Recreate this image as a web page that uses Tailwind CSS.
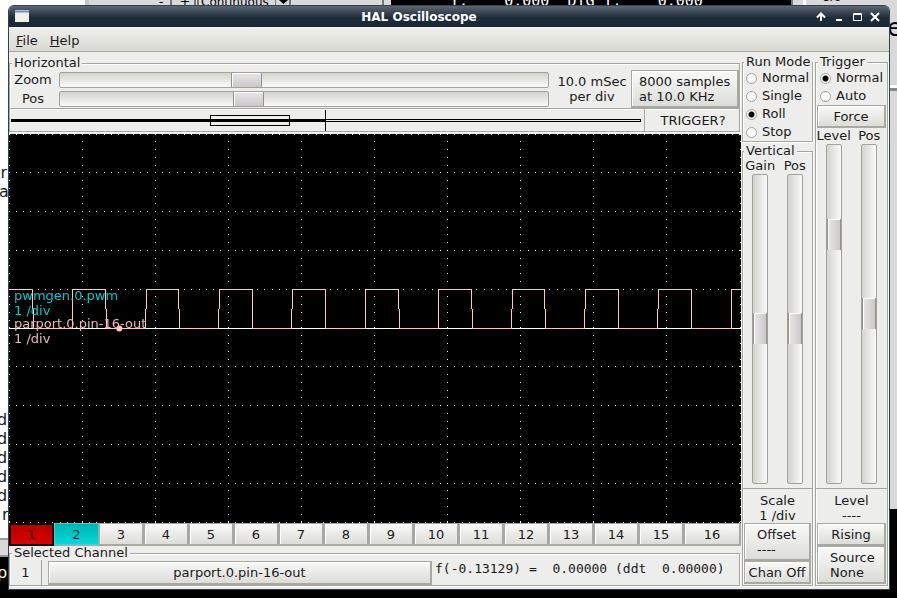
<!DOCTYPE html>
<html lang="en">
<head>
    <meta charset="UTF-8">
    <meta name="viewport" content="width=device-width, initial-scale=1.0">
    <title>HAL Oscilloscope</title>
    <script src="https://cdn.jsdelivr.net/npm/@tailwindcss/browser@4"></script>
</head>
<body class="relative h-screen overflow-hidden bg-white font-['DejaVu_Sans',sans-serif] text-[13px] leading-[15px] text-[#1a1a1a]">
    <!-- windows lying behind the scope -->
    <div class="absolute inset-0 overflow-hidden" aria-hidden="true">
        <div class="absolute left-[85px] top-0 h-3 w-[299px] border-l-4 border-r-2 border-l-[#c4c4c4] border-r-[#777] bg-[#d9d9d9] leading-3">
            <span class="absolute left-[63px] -top-2.5 h-[18px] w-5 border-r-2 border-[#777] pt-1.5 text-center text-black">-</span>
            <span class="absolute left-[87px] -top-2.5 h-[18px] w-5 border-r-2 border-[#777] pt-1.5 text-center text-black">+</span>
            <span class="absolute left-[108px] -top-2.5 h-[18px] w-[76px] border-l-2 border-[#777] pl-0.5 pt-1.5 text-[12px] text-black">Continuous</span>
            <svg class="absolute left-[186px] top-0" width="16" height="5"><path d="M0 0v5M15 0v5" stroke="#777" stroke-width="2"/><path d="M4 0h9L8.500 4z"/></svg>
        </div>
        <div class="absolute left-[384px] top-0 h-3 w-[407px] border-l-[7px] border-[#d9d9d9] bg-black"></div>
        <pre class="absolute left-[450px] -top-2 font-['DejaVu_Sans_Mono',monospace] text-[15px] leading-[18px] text-white">Y:    0.000  DTG Y:    0.000</pre>
        <div class="absolute left-[791px] right-0 top-0 h-[509px] border-l-2 border-[#777] bg-[#d9d9d9]">
            <div class="absolute left-2.5 top-0 h-3 w-[3px] bg-white"></div>
            <span class="absolute left-[29px] -top-2.5 text-[12px] text-black">ero</span>
            <span class="absolute right-[-5px] top-4 text-[24px] leading-6 text-black">e</span>
            <div class="absolute right-0 top-[85px] h-1.5 w-2 border-b-[3px] border-[#888] bg-white"></div>
        </div>
        <div class="absolute bottom-0 right-0 h-[89px] w-2 bg-black"></div>
        <div class="absolute bottom-0 left-0 right-0 h-2.5 bg-black"></div>
        <div class="absolute left-[-1px] top-[163px] w-2 text-right text-[16px] leading-[19px]">r<br>a</div>
        <div class="absolute left-[-3px] top-[410px] w-3 text-[16px] leading-[19px]">d<br>d<br>d<br>d<br>d<br>&nbsp;r</div>
        <div class="absolute bottom-[41px] left-0 h-[19px] w-2 border-y-2 border-[#999] bg-[#d9d9d9]"></div>
        <div class="absolute bottom-0 left-0 h-[41px] w-2 bg-black"></div>
        <span class="absolute bottom-4 left-[-3px] text-[16px] leading-[19px] text-white">p</span>
    </div>

    <div class="relative h-full pb-2 pl-2 pr-[7px] pt-[5px]">
        <main class="flex h-full flex-col overflow-hidden rounded-t-md border-x border-b border-[#33424f] bg-[#ededeb]">
            <!-- title bar -->
            <header class="relative flex h-[22px] shrink-0 items-center justify-end border-t border-[#33424f] bg-linear-to-b from-[#5c6873] via-[#1f2d3b] via-55% to-[#1a2836]">
                <svg class="absolute left-1.5 top-1" width="14" height="12"><path d="M0 0h14v12H0z" fill="#f0f0ea"/><path d="M0 1.500h14" stroke="#6b8cc4" stroke-width="2"/></svg>
                <h1 class="absolute inset-x-0 pr-15 pt-0.5 text-center text-[12px] font-bold text-white">HAL Oscilloscope</h1>
                <div class="relative mr-[7px] flex gap-1">
                    <button aria-label="Shade" class="size-[14px]"><svg width="14" height="14" fill="none" stroke="#fff" stroke-width="2"><path d="M7 11V4M3 7.500l4-4 4 4"/></svg></button>
                    <button aria-label="Minimize" class="size-[14px]"><svg width="14" height="14"><path d="M4 9h6v2H4z" fill="#fff"/></svg></button>
                    <button aria-label="Maximize" class="size-[14px]"><svg width="14" height="14" fill="none" stroke="#fff"><path d="M3.500 3.500h8v7h-8zM3 4.500h9"/></svg></button>
                    <button aria-label="Close" class="size-[14px]"><svg width="14" height="14" stroke="#fff" stroke-width="2"><path d="M3 3l8 8M11 3l-8 8"/></svg></button>
                </div>
            </header>
            <nav class="flex h-[25px] shrink-0 items-center gap-3 border-b border-[#a5a69c] bg-linear-to-b from-[#efefed] to-[#d9dad3] px-[7px] pt-0.5">
                <button><u>F</u>ile</button>
                <button><u>H</u>elp</button>
            </nav>

            <div class="flex min-h-0 flex-1 pb-[3px]">
                <!-- left side: time base, screen, channels -->
                <section class="flex min-w-0 flex-1 flex-col pt-1">
                    <fieldset class="mr-px border border-[#a5a69f] shadow-[inset_1px_1px_0_#fff,1px_1px_0_#fff]">
                        <legend class="ml-0.5 bg-[#ededeb] px-0.5 leading-[14px]">Horizontal</legend>
                        <div class="flex h-[38px]">
                            <div class="grid flex-1 grid-cols-[46px_1fr] content-start gap-x-[3px] gap-y-[3px] pt-0.5 text-center">
                                <label for="hzoom">Zoom</label>
                                <input id="hzoom" type="range" min="0" max="1000" value="374" class="h-4 w-full appearance-none rounded-xs border border-[#a2a29a] bg-linear-to-b from-[#d3d4ce] to-[#fafaf9] [&::-webkit-slider-thumb]:h-[14px] [&::-webkit-slider-thumb]:w-[31px] [&::-webkit-slider-thumb]:appearance-none [&::-webkit-slider-thumb]:border-x [&::-webkit-slider-thumb]:border-[#94928e] [&::-webkit-slider-thumb]:bg-linear-to-b [&::-webkit-slider-thumb]:from-[#e8e6e6] [&::-webkit-slider-thumb]:to-[#cac8c8] [&::-webkit-slider-thumb]:shadow-[inset_1px_1px_0_#fff]">
                                <label for="hpos">Pos</label>
                                <input id="hpos" type="range" min="0" max="1000" value="379" class="h-4 w-full appearance-none rounded-xs border border-[#a2a29a] bg-linear-to-b from-[#d3d4ce] to-[#fafaf9] [&::-webkit-slider-thumb]:h-[14px] [&::-webkit-slider-thumb]:w-[31px] [&::-webkit-slider-thumb]:appearance-none [&::-webkit-slider-thumb]:border-x [&::-webkit-slider-thumb]:border-[#94928e] [&::-webkit-slider-thumb]:bg-linear-to-b [&::-webkit-slider-thumb]:from-[#e8e6e6] [&::-webkit-slider-thumb]:to-[#cac8c8] [&::-webkit-slider-thumb]:shadow-[inset_1px_1px_0_#fff]">
                            </div>
                            <div class="w-[82px] self-center pl-1 text-center">10.0 mSec<br>per div</div>
                            <button class="w-[108px] whitespace-nowrap border border-b-2 border-r-2 border-[#a9a9a1] bg-linear-to-b from-[#f9f9f8] to-[#dcdcd8] pl-[7px] text-left shadow-[inset_1px_1px_0_#fff]">8000 samples<br>at 10.0 KHz</button>
                        </div>
                        <div class="flex h-[23px] border-t border-[#a5a69f] shadow-[inset_0_1px_0_#fff]">
                            <!-- record buffer: filled part, pretrigger mark, visible window -->
                            <svg class="ml-px h-[22px] w-full flex-1" shape-rendering="crispEdges">
                                <rect x="0" y="10" width="50%" height="3"/>
                                <rect x="49.900%" y="10" width="50%" height="1"/>
                                <rect x="49.900%" y="12" width="50%" height="1"/>
                                <rect x="99.800%" y="10" width="1" height="3"/>
                                <rect x="49.850%" y="1" width="1" height="21"/>
                                <rect x="31.700%" y="6.500" width="12.500%" height="10" fill="none" stroke="#000"/>
                            </svg>
                            <div class="ml-[3px] w-[95px] border-l border-[#a5a69f] pl-0.5 pt-1 text-center">TRIGGER?</div>
                        </div>
                    </fieldset>

                    <div class="relative mt-0.5 min-h-0 flex-1 overflow-hidden bg-black">
                        <canvas id="scope" class="absolute inset-0 size-full"></canvas>
                        <div class="absolute left-[5px] top-[154px] text-[#00c8c8]">pwmgen.0.pwm<br>1 /div</div>
                        <div class="absolute left-[5px] top-[182px] text-[#e6b8b8]">parport.0.pin-16-out<br>1 /div</div>
                    </div>

                    <div id="channels" class="grid h-[23px] grid-cols-[repeat(15,45fr)_57fr]">
                        <button class="border-2 border-[#200000] bg-linear-to-b from-[#b40000] to-[#dc0000] text-[#400000]">1</button>
                        <button class="border border-b-2 border-[#5cc8c8] bg-linear-to-b from-[#00b2b2] to-[#00dada] text-[#003c3c]">2</button>
                        <button class="border border-b-2 border-r-2 border-[#a9a9a1] bg-linear-to-b from-[#f9f9f8] to-[#dcdcd8] shadow-[inset_1px_1px_0_#fff]">3</button>
                        <button class="border border-b-2 border-r-2 border-[#a9a9a1] bg-linear-to-b from-[#f9f9f8] to-[#dcdcd8] shadow-[inset_1px_1px_0_#fff]">4</button>
                        <button class="border border-b-2 border-r-2 border-[#a9a9a1] bg-linear-to-b from-[#f9f9f8] to-[#dcdcd8] shadow-[inset_1px_1px_0_#fff]">5</button>
                        <button class="border border-b-2 border-r-2 border-[#a9a9a1] bg-linear-to-b from-[#f9f9f8] to-[#dcdcd8] shadow-[inset_1px_1px_0_#fff]">6</button>
                        <button class="border border-b-2 border-r-2 border-[#a9a9a1] bg-linear-to-b from-[#f9f9f8] to-[#dcdcd8] shadow-[inset_1px_1px_0_#fff]">7</button>
                        <button class="border border-b-2 border-r-2 border-[#a9a9a1] bg-linear-to-b from-[#f9f9f8] to-[#dcdcd8] shadow-[inset_1px_1px_0_#fff]">8</button>
                        <button class="border border-b-2 border-r-2 border-[#a9a9a1] bg-linear-to-b from-[#f9f9f8] to-[#dcdcd8] shadow-[inset_1px_1px_0_#fff]">9</button>
                        <button class="border border-b-2 border-r-2 border-[#a9a9a1] bg-linear-to-b from-[#f9f9f8] to-[#dcdcd8] shadow-[inset_1px_1px_0_#fff]">10</button>
                        <button class="border border-b-2 border-r-2 border-[#a9a9a1] bg-linear-to-b from-[#f9f9f8] to-[#dcdcd8] shadow-[inset_1px_1px_0_#fff]">11</button>
                        <button class="border border-b-2 border-r-2 border-[#a9a9a1] bg-linear-to-b from-[#f9f9f8] to-[#dcdcd8] shadow-[inset_1px_1px_0_#fff]">12</button>
                        <button class="border border-b-2 border-r-2 border-[#a9a9a1] bg-linear-to-b from-[#f9f9f8] to-[#dcdcd8] shadow-[inset_1px_1px_0_#fff]">13</button>
                        <button class="border border-b-2 border-r-2 border-[#a9a9a1] bg-linear-to-b from-[#f9f9f8] to-[#dcdcd8] shadow-[inset_1px_1px_0_#fff]">14</button>
                        <button class="border border-b-2 border-r-2 border-[#a9a9a1] bg-linear-to-b from-[#f9f9f8] to-[#dcdcd8] shadow-[inset_1px_1px_0_#fff]">15</button>
                        <button class="border border-b-2 border-r-2 border-[#a9a9a1] bg-linear-to-b from-[#f9f9f8] to-[#dcdcd8] shadow-[inset_1px_1px_0_#fff]">16</button>
                    </div>

                    <fieldset class="mr-px border border-[#a5a69f] shadow-[inset_1px_1px_0_#fff,1px_1px_0_#fff]">
                        <legend class="ml-0.5 bg-[#ededeb] px-0.5 leading-[14px]">Selected Channel</legend>
                        <div class="flex h-[25px]">
                            <div class="mr-1.5 w-8 border-r border-[#a5a69f] pt-[5px] text-center">1</div>
                            <button class="mt-px flex-1 border border-b-2 border-r-2 border-[#a9a9a1] bg-linear-to-b from-[#f9f9f8] to-[#dcdcd8] shadow-[inset_1px_1px_0_#fff]">parport.0.pin-16-out</button>
                            <output class="w-[307px] whitespace-pre pl-[3px] pt-px font-['DejaVu_Sans_Mono',monospace]">f(-0.13129) =  0.00000 (ddt  0.00000)</output>
                        </div>
                    </fieldset>
                </section>

                <!-- run mode + vertical -->
                <section class="flex w-[73px] shrink-0 flex-col gap-0.5 pl-px pr-px pt-[3px]">
                    <fieldset class="border border-[#a5a69f] shadow-[inset_1px_1px_0_#fff,1px_1px_0_#fff]">
                        <legend class="ml-px whitespace-nowrap bg-[#ededeb] px-0.5 leading-[14px]">Run Mode</legend>
                        <div class="flex flex-col pl-[3px] leading-[18px]">
                            <label class="flex items-center gap-[5px]"><input type="radio" name="run" class="size-[11px] shrink-0 appearance-none rounded-full border border-[#a0a098] bg-white checked:bg-[radial-gradient(circle,#000_2.5px,#fff_3.5px)]">Normal</label>
                            <label class="flex items-center gap-[5px]"><input type="radio" name="run" class="size-[11px] shrink-0 appearance-none rounded-full border border-[#a0a098] bg-white checked:bg-[radial-gradient(circle,#000_2.5px,#fff_3.5px)]">Single</label>
                            <label class="flex items-center gap-[5px]"><input type="radio" name="run" checked class="size-[11px] shrink-0 appearance-none rounded-full border border-[#a0a098] bg-white checked:bg-[radial-gradient(circle,#000_2.5px,#fff_3.5px)]">Roll</label>
                            <label class="flex items-center gap-[5px]"><input type="radio" name="run" class="size-[11px] shrink-0 appearance-none rounded-full border border-[#a0a098] bg-white checked:bg-[radial-gradient(circle,#000_2.5px,#fff_3.5px)]">Stop</label>
                        </div>
                    </fieldset>
                    <fieldset class="flex min-h-0 flex-1 flex-col border border-[#a5a69f] shadow-[inset_1px_1px_0_#fff,1px_1px_0_#fff]">
                        <legend class="ml-px bg-[#ededeb] px-0.5 leading-[14px]">Vertical</legend>
                        <div class="grid min-h-0 flex-1 grid-cols-2 grid-rows-[15px_1fr] justify-items-center gap-y-px pb-1 text-center">
                            <label for="vgain">Gain</label>
                            <label for="vpos">Pos</label>
                            <input id="vgain" type="range" min="0" max="1000" value="497" class="h-full w-4 appearance-none rounded-xs border border-[#a2a29a] bg-linear-to-r from-[#d3d4ce] to-[#fafaf9] [writing-mode:vertical-lr] [&::-webkit-slider-thumb]:h-[31px] [&::-webkit-slider-thumb]:w-[14px] [&::-webkit-slider-thumb]:appearance-none [&::-webkit-slider-thumb]:border-y [&::-webkit-slider-thumb]:border-[#94928e] [&::-webkit-slider-thumb]:bg-linear-to-r [&::-webkit-slider-thumb]:from-[#e8e6e6] [&::-webkit-slider-thumb]:to-[#cac8c8] [&::-webkit-slider-thumb]:shadow-[inset_1px_1px_0_#fff]">
                            <input id="vpos" type="range" min="0" max="1000" value="497" class="h-full w-4 appearance-none rounded-xs border border-[#a2a29a] bg-linear-to-r from-[#d3d4ce] to-[#fafaf9] [writing-mode:vertical-lr] [&::-webkit-slider-thumb]:h-[31px] [&::-webkit-slider-thumb]:w-[14px] [&::-webkit-slider-thumb]:appearance-none [&::-webkit-slider-thumb]:border-y [&::-webkit-slider-thumb]:border-[#94928e] [&::-webkit-slider-thumb]:bg-linear-to-r [&::-webkit-slider-thumb]:from-[#e8e6e6] [&::-webkit-slider-thumb]:to-[#cac8c8] [&::-webkit-slider-thumb]:shadow-[inset_1px_1px_0_#fff]">
                        </div>
                        <div class="border-t border-[#a5a69f] pt-1 text-center">Scale<br>1 /div</div>
                        <div class="flex flex-col px-px pb-px">
                            <button class="h-[38px] border border-b-2 border-r-2 border-[#a9a9a1] bg-linear-to-b from-[#f9f9f8] to-[#dcdcd8] pl-3 text-left shadow-[inset_1px_1px_0_#fff]">Offset<br>----</button>
                            <button class="h-[23px] whitespace-nowrap border border-b-2 border-r-2 border-[#a9a9a1] bg-linear-to-b from-[#f9f9f8] to-[#dcdcd8] shadow-[inset_1px_1px_0_#fff]">Chan Off</button>
                        </div>
                    </fieldset>
                </section>

                <!-- trigger -->
                <section class="flex w-[75px] shrink-0 flex-col px-px pt-[3px]">
                    <fieldset class="flex min-h-0 flex-1 flex-col border border-[#a5a69f] shadow-[inset_1px_1px_0_#fff,1px_1px_0_#fff]">
                        <legend class="ml-0.5 bg-[#ededeb] px-0.5 leading-[14px]">Trigger</legend>
                        <div class="flex flex-col pl-1 leading-[18px]">
                            <label class="flex items-center gap-[5px]"><input type="radio" name="trig" checked class="size-[11px] shrink-0 appearance-none rounded-full border border-[#a0a098] bg-white checked:bg-[radial-gradient(circle,#000_2.5px,#fff_3.5px)]">Normal</label>
                            <label class="flex items-center gap-[5px]"><input type="radio" name="trig" class="size-[11px] shrink-0 appearance-none rounded-full border border-[#a0a098] bg-white checked:bg-[radial-gradient(circle,#000_2.5px,#fff_3.5px)]">Auto</label>
                        </div>
                        <button class="mx-px h-[23px] border border-b-2 border-r-2 border-[#a9a9a1] bg-linear-to-b from-[#f9f9f8] to-[#dcdcd8] shadow-[inset_1px_1px_0_#fff]">Force</button>
                        <div class="grid min-h-0 flex-1 grid-cols-2 grid-rows-[15px_1fr] justify-items-center gap-y-px pb-1 text-center">
                            <label for="tlevel">Level</label>
                            <label for="tpos">Pos</label>
                            <input id="tlevel" type="range" min="0" max="1000" value="241" class="h-full w-4 appearance-none rounded-xs border border-[#a2a29a] bg-linear-to-r from-[#d3d4ce] to-[#fafaf9] [writing-mode:vertical-lr] [&::-webkit-slider-thumb]:h-[31px] [&::-webkit-slider-thumb]:w-[14px] [&::-webkit-slider-thumb]:appearance-none [&::-webkit-slider-thumb]:border-y [&::-webkit-slider-thumb]:border-[#94928e] [&::-webkit-slider-thumb]:bg-linear-to-r [&::-webkit-slider-thumb]:from-[#e8e6e6] [&::-webkit-slider-thumb]:to-[#cac8c8] [&::-webkit-slider-thumb]:shadow-[inset_1px_1px_0_#fff]">
                            <input id="tpos" type="range" min="0" max="1000" value="498" class="h-full w-4 appearance-none rounded-xs border border-[#a2a29a] bg-linear-to-r from-[#d3d4ce] to-[#fafaf9] [writing-mode:vertical-lr] [&::-webkit-slider-thumb]:h-[31px] [&::-webkit-slider-thumb]:w-[14px] [&::-webkit-slider-thumb]:appearance-none [&::-webkit-slider-thumb]:border-y [&::-webkit-slider-thumb]:border-[#94928e] [&::-webkit-slider-thumb]:bg-linear-to-r [&::-webkit-slider-thumb]:from-[#e8e6e6] [&::-webkit-slider-thumb]:to-[#cac8c8] [&::-webkit-slider-thumb]:shadow-[inset_1px_1px_0_#fff]">
                        </div>
                        <div class="border-t border-[#a5a69f] pt-1 text-center">Level<br>----</div>
                        <div class="flex flex-col px-px pb-px">
                            <button class="h-[23px] border border-b-2 border-r-2 border-[#a9a9a1] bg-linear-to-b from-[#f9f9f8] to-[#dcdcd8] shadow-[inset_1px_1px_0_#fff]">Rising</button>
                            <button class="h-[38px] border border-b-2 border-r-2 border-[#a9a9a1] bg-linear-to-b from-[#f9f9f8] to-[#dcdcd8] pl-3 text-left shadow-[inset_1px_1px_0_#fff]">Source<br>None</button>
                        </div>
                    </fieldset>
                </section>
            </div>
        </main>
    </div>
</body>
<script>
    const canvas = document.getElementById("scope");

    function drawScope() {
        const w = canvas.width = canvas.offsetWidth;
        const h = canvas.height = canvas.offsetHeight;
        const ctx = canvas.getContext("2d");
        const dx = (w - 1) / 10;
        const dy = (h - 1) / 10;

        // graticule, 10 x 10 divisions with 10 and 5 dots each
        ctx.fillStyle = "#fff";
        for (let i = 0; i <= 10; i++) {
            for (let j = 0; j <= 100; j++) ctx.fillRect(Math.floor(j * dx / 10), Math.floor(i * dy), 1, 1);
            for (let j = 0; j <= 50; j++) ctx.fillRect(Math.floor(i * dx), Math.floor(j * dy / 5), 1, 1);
        }

        // baseline
        const low = Math.round(dy * 5);
        const high = Math.round(dy * 4);
        const mid = Math.round(dy * 4.5);

        // square wave, edges sampled at two points
        ctx.fillRect(0, low, w, 1);
        ctx.fillStyle = "#ffc8c8";
        const period = dx * 1.0014;
        let start = 0;
        for (let k = 0; k < 10; k++) {
            const fall = k * period + 23.3;
            const rise = k * period + 63.3;
            const fallTop = Math.round(fall - 0.3);
            const fallLow = Math.round(fall + 0.2);
            const riseLow = Math.floor(rise);
            const riseTop = Math.round(rise);
            ctx.fillRect(start, high, fallTop - start + 1, 1);
            ctx.fillRect(fallTop, high, 1, mid - high);
            ctx.fillRect(fallLow, mid, 1, low - mid);
            ctx.fillRect(fallLow, low, riseLow - fallLow + 1, 1);
            ctx.fillRect(riseLow, mid, 1, low - mid);
            ctx.fillRect(riseTop, high, 1, mid - high);
            start = riseTop;
        }
        ctx.fillRect(start, high, w - start, 1);

        // cursor
        ctx.beginPath();
        ctx.arc(w * 0.15 + 0.5, low + 0.5, 3, 0, Math.PI * 2);
        ctx.fill();
    }

    window.addEventListener("load", drawScope);
    window.addEventListener("resize", drawScope);
    drawScope();
</script>
</html>
